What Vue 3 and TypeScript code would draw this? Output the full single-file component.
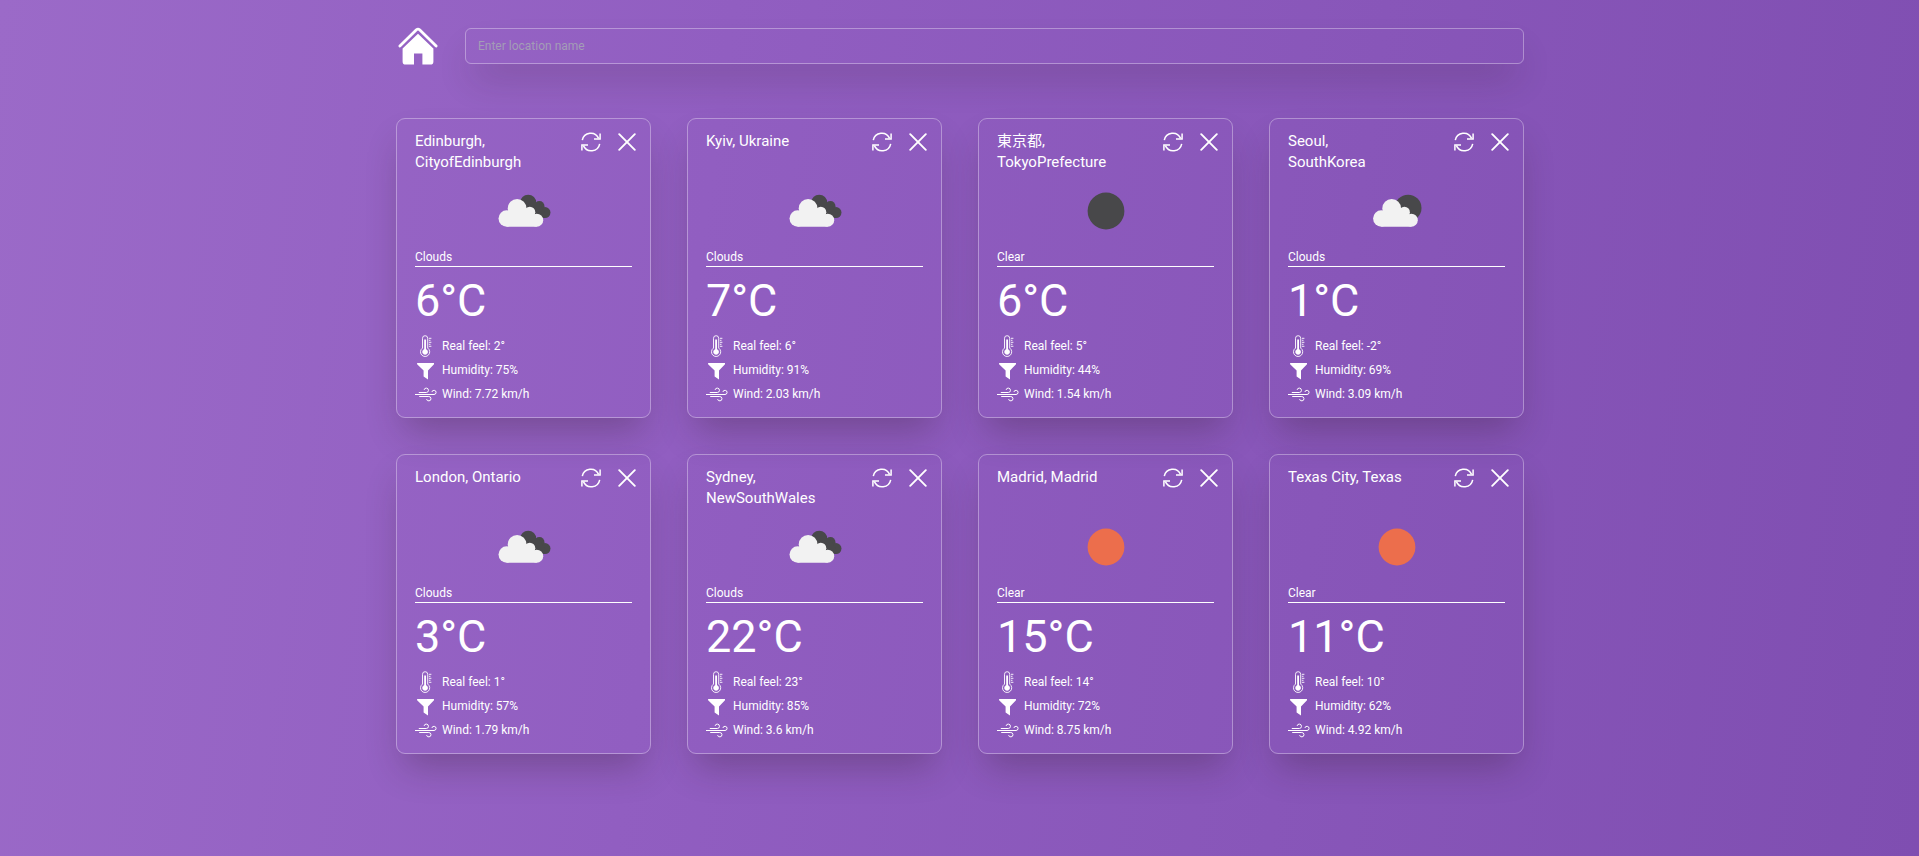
<script setup lang="ts">
import { ref } from 'vue'

type Icon = 'clouds' | 'partly' | 'night' | 'sun'

interface Place {
  name: string[]
  icon: Icon
  condition: string
  temp: number
  feel: number
  humidity: number
  wind: number
}

const query = ref('')

const places = ref<Place[]>([
  { name: ['Edinburgh,', 'CityofEdinburgh'], icon: 'clouds', condition: 'Clouds', temp: 6, feel: 2, humidity: 75, wind: 7.72 },
  { name: ['Kyiv, Ukraine'], icon: 'clouds', condition: 'Clouds', temp: 7, feel: 6, humidity: 91, wind: 2.03 },
  { name: ['東京都,', 'TokyoPrefecture'], icon: 'night', condition: 'Clear', temp: 6, feel: 5, humidity: 44, wind: 1.54 },
  { name: ['Seoul,', 'SouthKorea'], icon: 'partly', condition: 'Clouds', temp: 1, feel: -2, humidity: 69, wind: 3.09 },
  { name: ['London, Ontario'], icon: 'clouds', condition: 'Clouds', temp: 3, feel: 1, humidity: 57, wind: 1.79 },
  { name: ['Sydney,', 'NewSouthWales'], icon: 'clouds', condition: 'Clouds', temp: 22, feel: 23, humidity: 85, wind: 3.6 },
  { name: ['Madrid, Madrid'], icon: 'sun', condition: 'Clear', temp: 15, feel: 14, humidity: 72, wind: 8.75 },
  { name: ['Texas City, Texas'], icon: 'sun', condition: 'Clear', temp: 11, feel: 10, humidity: 62, wind: 4.92 },
])

function remove(index: number) {
  places.value.splice(index, 1)
}
</script>

<template>
  <div class="page">
    <div class="container">
      <header class="header">
        <a class="home" aria-label="Home">
          <svg width="40" height="38" viewBox="0 0 40 38">
            <path d="M1.9 19 L18.4 2.8 Q20 1.4 21.6 2.8 L38.1 19" fill="none" stroke="#fff" stroke-width="2.8" stroke-linecap="round" stroke-linejoin="round" />
            <path d="M20 6.8 L35.4 21.6 V34.4 Q35.4 37.6 32.2 37.6 H24.4 V26.4 H16 V37.6 H7.8 Q4.6 37.6 4.6 34.4 V21.6 Z" fill="#fff" />
          </svg>
        </a>
        <input v-model="query" class="search" type="text" placeholder="Enter location name" />
      </header>

      <main class="grid">
        <article v-for="(place, index) in places" :key="place.name.join(' ')" class="card">
          <div class="top">
            <h2 class="name">
              <span v-for="line in place.name" :key="line">{{ line }}</span>
            </h2>
            <div class="actions">
              <button class="action" aria-label="Refresh">
                <svg width="22" height="20" viewBox="0 0 22 20" fill="none" stroke="#fff" stroke-width="1.5">
                  <path d="M2.3 8.2 A8.6 8.6 0 0 1 18.6 6.4" />
                  <path d="M19.7 11.8 A8.6 8.6 0 0 1 3.4 13.6" />
                  <path d="M20.1 1.4 V6.9 H14" />
                  <path d="M1.9 18.6 V13.1 H8" />
                </svg>
              </button>
              <button class="action" aria-label="Remove" @click="remove(index)">
                <svg width="18" height="18" viewBox="0 0 18 18" stroke="#fff" stroke-width="1.9" stroke-linecap="round">
                  <path d="M1.2 1.2 L16.8 16.8 M16.8 1.2 L1.2 16.8" />
                </svg>
              </button>
            </div>
          </div>

          <div class="picture">
            <svg width="72" height="72" viewBox="0 0 72 72">
              <circle v-if="place.icon === 'night'" cx="36" cy="36" r="18.4" fill="#48484a" />
              <circle v-if="place.icon === 'sun'" cx="36" cy="36" r="18.4" fill="#ec6e4c" />
              <g v-if="place.icon === 'clouds'" fill="#48484a">
                <circle cx="40.2" cy="27.8" r="8.1" />
                <circle cx="51.4" cy="31.2" r="5.1" />
                <circle cx="57" cy="37.6" r="5.5" />
                <path d="M40 28 H51 L57 38 V43.1 H42 Z" />
              </g>
              <circle v-if="place.icon === 'partly'" cx="47.1" cy="33.1" r="13.4" fill="#48484a" />
              <g
                v-if="place.icon === 'clouds' || place.icon === 'partly'"
                :transform="place.icon === 'partly' ? 'translate(1.6 0)' : undefined"
                fill="#f2f2f2"
              >
                <circle cx="18.7" cy="43.5" r="8.2" />
                <circle cx="29.1" cy="33.4" r="9.4" />
                <circle cx="41.8" cy="37.2" r="5.5" />
                <circle cx="48.7" cy="45.2" r="6.5" />
                <path d="M18.7 40 L24 34 H38 L46 38 L48.7 45 V51.7 H18.7 Z" />
              </g>
            </svg>
          </div>

          <p class="condition">{{ place.condition }}</p>
          <p class="temp">{{ place.temp }}°C</p>

          <ul class="details">
            <li>
              <svg width="22" height="22" viewBox="0 0 22 22" fill="none" stroke="#fff" stroke-width="0.9">
                <path d="M7.5 13.1 V3.3 A2.6 2.6 0 0 1 12.7 3.3 V13.1 A4.6 4.6 0 1 1 7.5 13.1 Z" />
                <circle cx="10.1" cy="16.9" r="2.4" fill="#fff" />
                <path d="M10.1 4.5 V15" stroke-width="1.8" />
                <path d="M13.9 3.3 H16.4 M13.9 5.3 H15.5 M13.9 7.3 H16.4 M13.9 9.3 H15.5 M13.9 11.3 H16.4" />
              </svg>
              <span>Real feel: {{ place.feel }}°</span>
            </li>
            <li>
              <svg width="22" height="22" viewBox="0 0 22 22">
                <path d="M2.1 4 H19 V5.3 L13 11.4 V20.6 L8.6 17.6 V11.4 L2.1 5.3 Z" fill="#fff" />
              </svg>
              <span>Humidity: {{ place.humidity }}%</span>
            </li>
            <li>
              <svg width="22" height="22" viewBox="0 0 22 22" fill="none" stroke="#fff" stroke-width="1">
                <path d="M0 11.5 H19 A2.1 2.1 0 1 0 16.9 9" />
                <path d="M3.8 9.5 H11.3 A2.2 2.2 0 1 0 9.1 6.9" />
                <path d="M4.2 13.5 H13.8 A2.2 2.2 0 1 1 11.6 16.1" />
              </svg>
              <span>Wind: {{ place.wind }} km/h</span>
            </li>
          </ul>
        </article>
      </main>
    </div>
  </div>
</template>

<style>
body {
  margin: 0;
}
</style>

<style scoped>
.page {
  box-sizing: border-box;
  min-height: 100vh;
  padding: 28px 0 36px;
  background: linear-gradient(98deg, #9b6ac8 0%, #915ec1 36%, #7f4eb1 100%);
  color: #fff;
  font-family: Roboto, 'Noto Sans CJK JP', sans-serif;
}

.container {
  width: 1128px;
  margin: 0 auto 0 396px;
}

.header {
  display: flex;
  align-items: flex-start;
  height: 90px;
}

.home {
  display: block;
  width: 40px;
  height: 38px;
  margin: -1px 27px 0 2px;
}

.home svg,
.action svg,
.picture svg,
.details svg {
  display: block;
}

.search {
  box-sizing: border-box;
  flex: 1;
  height: 36px;
  padding: 0 12px;
  border: 1px solid rgba(255, 255, 255, 0.34);
  border-radius: 6px;
  outline: none;
  background: transparent;
  box-shadow: 0 20px 36px -8px rgba(45, 25, 30, 0.24);
  color: #fff;
  font: 12px Roboto, sans-serif;
}

.search::placeholder {
  color: #a39db6;
  opacity: 1;
}

.grid {
  display: grid;
  grid-template-columns: repeat(4, 255px);
  gap: 36px;
}

.card {
  box-sizing: border-box;
  height: 300px;
  padding: 12px 18px 0;
  border: 1px solid rgba(255, 255, 255, 0.34);
  border-radius: 9px;
  box-shadow: 0 20px 36px -8px rgba(45, 25, 30, 0.29);
}

.top {
  display: flex;
  justify-content: space-between;
  height: 44px;
}

.name {
  margin: 0;
  font-size: 15px;
  font-weight: 400;
  line-height: 21px;
}

.name span {
  display: block;
  height: 21px;
}

.actions {
  display: flex;
  gap: 16px;
  padding-top: 1px;
  margin-right: -4px;
}

.action {
  display: block;
  height: 20px;
  padding: 0;
  border: 0;
  background: none;
  cursor: pointer;
}

.picture {
  display: flex;
  justify-content: center;
  height: 72px;
}

.condition {
  margin: 2px 0 0;
  padding-bottom: 1px;
  border-bottom: 1px solid #fff;
  font-size: 12px;
  line-height: 16px;
}

.temp {
  margin: 9px 0 0;
  font-size: 45px;
  line-height: 50px;
}

.details {
  margin: 8px 0 0;
  padding: 0;
  list-style: none;
  font-size: 12px;
}

.details li {
  display: flex;
  align-items: center;
  gap: 5px;
  height: 24px;
}
</style>
